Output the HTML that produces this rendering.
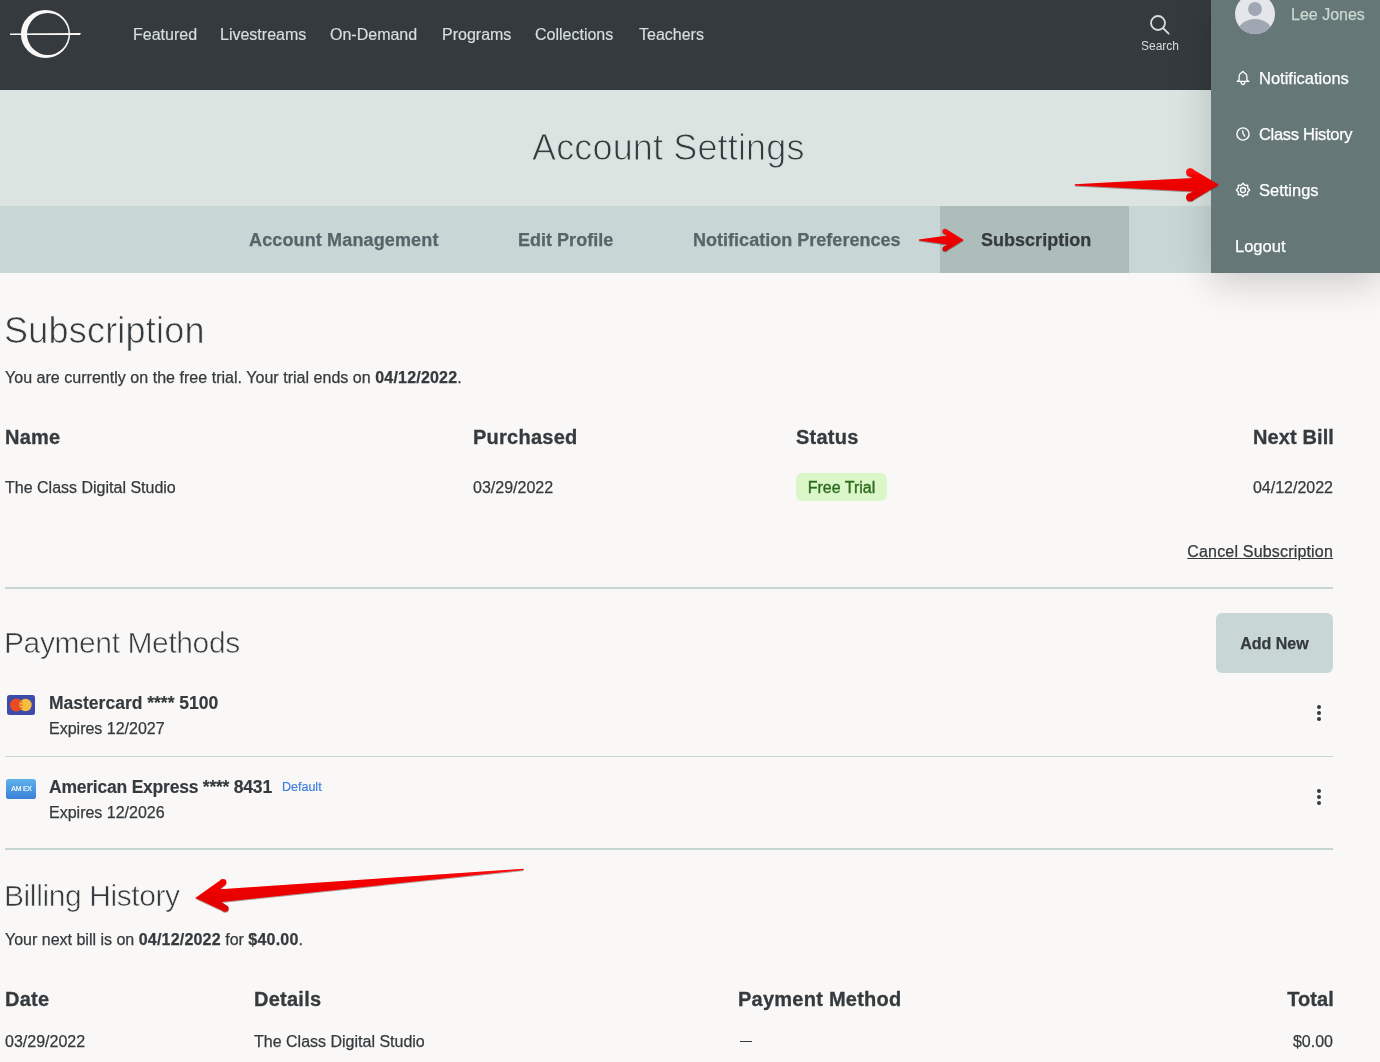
<!DOCTYPE html>
<html><head><meta charset="utf-8">
<style>
*{margin:0;padding:0;box-sizing:border-box}
html,body{width:1380px;height:1062px;overflow:hidden;background:#f9f8f7;font-family:"Liberation Sans",sans-serif;color:#343a3d}
.a{position:absolute;white-space:nowrap}
#nav{position:absolute;left:0;top:0;width:1380px;height:90px;background:#343a3d}
.nl{position:absolute;top:25px;font-size:16px;color:#d6dfdb;line-height:20px;-webkit-text-stroke:0.2px #d6dfdb}
#hdr{position:absolute;left:0;top:90px;width:1380px;height:116px;background:#dbe4e1}
#tabs{position:absolute;left:0;top:206px;width:1380px;height:67px;background:#c8d7d5}
#acttab{position:absolute;left:940px;top:206px;width:189px;height:67px;background:#adbdbb}
.tb{position:absolute;top:229px;font-size:18px;font-weight:bold;color:#55656a;line-height:22px;letter-spacing:0.02px;-webkit-text-stroke:0.25px currentColor}
#dd{position:absolute;left:1211px;top:0;width:169px;height:273px;background:#667777;box-shadow:0 10px 36px rgba(0,0,0,.18)}
.di{position:absolute;left:48px;font-size:16.5px;color:#fff;line-height:20px;-webkit-text-stroke:0.25px currentColor}
.h2{position:absolute;left:4px;font-weight:normal;color:#343a3d;-webkit-text-stroke:0.7px #f9f8f7}
.p{position:absolute;font-size:16px;line-height:20px;color:#343a3d;-webkit-text-stroke:0.25px #343a3d}
.p b{letter-spacing:0.2px}
.th{position:absolute;font-size:20px;font-weight:bold;line-height:22px;color:#343a3d;letter-spacing:0.25px;-webkit-text-stroke:0.3px #343a3d}
.hr{position:absolute;left:5px;width:1328px;height:2px;background:#c7d6d2}
</style></head><body><div id="root" style="position:absolute;left:0;top:0;width:1380px;height:1062px;will-change:transform">
<div id="nav">
  <svg class="a" style="left:0;top:0" width="100" height="70" viewBox="0 0 100 70">
    <path fill="#f9f8f7" fill-rule="evenodd" d="M45.5 10 A24.6 24 0 1 0 45.5 58 A24.6 24 0 1 0 45.5 10 Z M47.8 13 A20.8 21 0 1 1 47.8 55 A20.8 21 0 1 1 47.8 13 Z"/>
    <path fill="#f9f8f7" d="M10 33.4 L81 33.1 L80 35 L10 35 Z"/>
  </svg>
  <div class="nl" style="left:133px">Featured</div>
  <div class="nl" style="left:220px">Livestreams</div>
  <div class="nl" style="left:330px">On-Demand</div>
  <div class="nl" style="left:442px">Programs</div>
  <div class="nl" style="left:535px">Collections</div>
  <div class="nl" style="left:639px">Teachers</div>
  <svg class="a" style="left:1149px;top:14px" width="22" height="22" viewBox="0 0 22 22"><circle cx="9" cy="9" r="7" fill="none" stroke="#d6dfdb" stroke-width="1.8"/><path d="M14 14 L19.6 19.6" stroke="#d6dfdb" stroke-width="1.8" stroke-linecap="round"/></svg>
  <div class="a" style="left:1141px;top:39px;font-size:12px;color:#d6dfdb;line-height:14px">Search</div>
</div>
<div id="hdr"></div>
<div class="a" style="left:532px;top:126px;font-size:36px;letter-spacing:0.15px;color:#343a3d;line-height:44px;-webkit-text-stroke:0.9px #dbe4e1">Account Settings</div>
<div id="tabs"></div>
<div id="acttab"></div>
<div class="tb" style="left:249px;letter-spacing:0.14px">Account Management</div>
<div class="tb" style="left:518px">Edit Profile</div>
<div class="tb" style="left:693px">Notification Preferences</div>
<div class="tb" style="left:981px;color:#343a3d">Subscription</div>

<div id="dd">
  <svg class="a" style="left:24px;top:-6px" width="40" height="40" viewBox="0 0 40 40"><defs><clipPath id="cc"><circle cx="20" cy="20" r="20"/></clipPath></defs><circle cx="20" cy="20" r="20" fill="#e4e6ea"/><g clip-path="url(#cc)"><circle cx="20" cy="15" r="6.9" fill="#a1a6b3"/><ellipse cx="20" cy="38" rx="17" ry="13" fill="#a1a6b3"/></g></svg>
  <div class="di" style="left:80px;top:5px;font-size:16px;color:#cbd8d2">Lee Jones</div>
  <svg class="a" style="left:19px;top:66px" width="26" height="24" viewBox="0 0 26 24"><path d="M12.9 5.4 L9.7 8.3 C9.3 8.8 9.2 9.3 9.2 10.2 L9.1 13.9 L7.2 15.4 H18.8 L16.9 13.9 L16.8 10.2 C16.8 9.3 16.7 8.8 16.3 8.4 Z M10.8 15.6 C11.3 17.9 12 18.5 13 18.5 C14 18.5 14.6 17.9 15.1 15.6" fill="none" stroke="#fff" stroke-width="1.3" stroke-linejoin="round"/></svg>
  <div class="di" style="top:68px">Notifications</div>
  <svg class="a" style="left:19px;top:122px" width="26" height="24" viewBox="0 0 26 24"><circle cx="13" cy="12" r="6.1" fill="none" stroke="#fff" stroke-width="1.4"/><path d="M12.7 8.6 L12.9 11.4 L14.7 14.2" fill="none" stroke="#fff" stroke-width="1.3" stroke-linecap="round"/></svg>
  <div class="di" style="top:124px;letter-spacing:-0.3px">Class History</div>
  <svg class="a" style="left:19px;top:178px" width="26" height="24" viewBox="0 0 26 24"><path d="M13.00 5.30 L14.95 7.29 L17.74 7.26 L17.71 10.05 L19.70 12.00 L17.71 13.95 L17.74 16.74 L14.95 16.71 L13.00 18.70 L11.05 16.71 L8.26 16.74 L8.29 13.95 L6.30 12.00 L8.29 10.05 L8.26 7.26 L11.05 7.29 Z" fill="none" stroke="#fff" stroke-width="1.3" stroke-linejoin="round"/><circle cx="13" cy="12" r="2.5" fill="none" stroke="#fff" stroke-width="1.3"/></svg>
  <div class="di" style="top:180px">Settings</div>
  <div class="di" style="left:24px;top:236px">Logout</div>
</div>

<!-- Subscription -->
<div class="h2" style="top:311px;font-size:36px;line-height:40px;letter-spacing:0.22px">Subscription</div>
<div class="p" style="left:5px;top:368px;letter-spacing:0.03px">You are currently on the free trial. Your trial ends on <b>04/12/2022</b>.</div>
<div class="th" style="left:5px;top:426px">Name</div>
<div class="th" style="left:473px;top:426px">Purchased</div>
<div class="th" style="left:796px;top:426px">Status</div>
<div class="th" style="right:46px;top:426px;letter-spacing:0.1px">Next Bill</div>
<div class="p" style="left:5px;top:478px">The Class Digital Studio</div>
<div class="p" style="left:473px;top:478px">03/29/2022</div>
<div class="a" style="left:796px;top:473px;width:91px;height:28px;border-radius:6px;background:#dbf6c9;color:#2c6a1c;font-size:16px;line-height:30px;text-align:center;-webkit-text-stroke:0.35px #2c6a1c">Free Trial</div>
<div class="p" style="right:47px;top:478px">04/12/2022</div>
<div class="p" style="right:47px;top:542px;text-decoration:underline;letter-spacing:0.18px">Cancel Subscription</div>
<div class="hr" style="top:587px"></div>

<!-- Payment -->
<div class="h2" style="top:626px;font-size:30px;line-height:34px;letter-spacing:-0.4px;-webkit-text-stroke:0.6px #f9f8f7">Payment Methods</div>
<div class="a" style="left:1216px;top:613px;width:117px;height:60px;border-radius:6px;background:#c8d7d5;font-weight:bold;font-size:16px;line-height:61px;text-align:center;color:#343a3d;-webkit-text-stroke:0.25px #343a3d">Add New</div>
<svg class="a" style="left:7px;top:695px" width="28" height="20" viewBox="0 0 28 20"><rect x="0" y="0" width="28" height="20" rx="2.5" fill="#3f4ba8"/><circle cx="9.3" cy="10" r="6.4" fill="#e94c25"/><circle cx="18.5" cy="10" r="6.2" fill="#f4be3e"/><path d="M12.6 7 H15.6 M12.3 10 H15.6 M12.6 13 H15.6" stroke="#e94c25" stroke-width="1.1"/></svg>
<div class="a" style="left:49px;top:692px;font-size:17.5px;font-weight:bold;line-height:22px;-webkit-text-stroke:0.15px #343a3d">Mastercard **** 5100</div>
<div class="p" style="left:49px;top:719px">Expires 12/2027</div>
<svg class="a" style="left:6px;top:779px" width="30" height="20" viewBox="0 0 30 20"><defs><linearGradient id="ag" x1="0" y1="0" x2="0" y2="1"><stop offset="0" stop-color="#5eb3ec"/><stop offset="1" stop-color="#3a7fd6"/></linearGradient></defs><rect x="0" y="0" width="30" height="20" rx="2.5" fill="url(#ag)"/><text x="15.5" y="12.3" font-family="Liberation Sans" font-size="7" fill="#fff" stroke="#fff" stroke-width="0.15" text-anchor="middle" letter-spacing="-0.25">AM EX</text></svg>
<div class="a" style="left:49px;top:776px;font-size:17.5px;font-weight:bold;line-height:22px;letter-spacing:-0.22px;-webkit-text-stroke:0.15px #343a3d">American Express **** 8431</div>
<div class="a" style="left:282px;top:779px;font-size:12.5px;color:#3f7fe0;line-height:16px;-webkit-text-stroke:0.2px #3f7fe0">Default</div>
<div class="p" style="left:49px;top:803px">Expires 12/2026</div>
<svg class="a" style="left:1316px;top:704px" width="6" height="18" viewBox="0 0 6 18"><circle cx="3" cy="3" r="2" fill="#343a3d"/><circle cx="3" cy="9" r="2" fill="#343a3d"/><circle cx="3" cy="15" r="2" fill="#343a3d"/></svg>
<svg class="a" style="left:1316px;top:788px" width="6" height="18" viewBox="0 0 6 18"><circle cx="3" cy="3" r="2" fill="#343a3d"/><circle cx="3" cy="9" r="2" fill="#343a3d"/><circle cx="3" cy="15" r="2" fill="#343a3d"/></svg>
<div class="hr" style="top:756px;height:1px"></div>
<div class="hr" style="top:848px"></div>

<!-- Billing -->
<div class="h2" style="top:879px;font-size:30px;line-height:34px;letter-spacing:-0.4px;-webkit-text-stroke:0.6px #f9f8f7">Billing History</div>
<div class="p" style="left:5px;top:930px">Your next bill is on <b>04/12/2022</b> for <b>$40.00</b>.</div>
<div class="th" style="left:5px;top:988px">Date</div>
<div class="th" style="left:254px;top:988px">Details</div>
<div class="th" style="left:738px;top:988px">Payment Method</div>
<div class="th" style="right:46px;top:988px;letter-spacing:0.1px">Total</div>
<div class="p" style="left:5px;top:1032px">03/29/2022</div>
<div class="p" style="left:254px;top:1032px">The Class Digital Studio</div>
<div class="a" style="left:740px;top:1041px;width:12px;height:1.4px;background:#343a3d"></div>
<div class="p" style="right:47px;top:1032px">$0.00</div>

<!-- annotation arrows -->
<svg class="a" style="left:0;top:0" width="1380" height="1062" viewBox="0 0 1380 1062">
<defs><linearGradient id="rg1" gradientUnits="userSpaceOnUse" x1="0" y1="168" x2="0" y2="202"><stop offset="0" stop-color="#ff0808"/><stop offset="1" stop-color="#dc0000"/></linearGradient><linearGradient id="rg2" gradientUnits="userSpaceOnUse" x1="0" y1="228" x2="0" y2="252"><stop offset="0" stop-color="#ff0808"/><stop offset="1" stop-color="#dc0000"/></linearGradient><linearGradient id="rg3" gradientUnits="userSpaceOnUse" x1="0" y1="866" x2="0" y2="913"><stop offset="0" stop-color="#ff0808"/><stop offset="1" stop-color="#dc0000"/></linearGradient><filter id="sh" x="-5%" y="-50%" width="110%" height="200%"><feDropShadow dx="0" dy="0.8" stdDeviation="0.6" flood-color="#000" flood-opacity="0.45"/></filter></defs>
<g fill="url(#rg1)" filter="url(#sh)"><path d="M1218.90 184.80 L1191.80 200.97 L1188.60 193.63 L1193.00 191.60 L1074.80 185.40 L1074.80 184.20 L1193.00 178.00 L1188.60 175.97 L1191.80 168.63 Z"/><circle cx="1190.20" cy="197.30" r="4.00"/><circle cx="1190.20" cy="172.30" r="4.00"/></g>
<g fill="url(#rg2)" filter="url(#sh)"><path d="M963.80 240.00 L946.05 251.02 L943.95 246.48 L947.50 244.55 L918.90 240.60 L918.90 239.40 L947.50 235.45 L943.95 233.52 L946.05 228.98 Z"/><circle cx="945.00" cy="248.75" r="2.50"/><circle cx="945.00" cy="231.25" r="2.50"/></g>
<g fill="url(#rg3)" filter="url(#sh)"><path d="M195.30 897.90 L221.44 879.46 L224.67 885.22 L220.25 889.26 L523.55 868.80 L523.65 870.00 L221.36 902.11 L226.42 905.33 L224.23 911.56 Z"/><circle cx="223.06" cy="882.34" r="3.30"/><circle cx="225.32" cy="908.44" r="3.30"/></g>
</svg>
</div></body></html>
